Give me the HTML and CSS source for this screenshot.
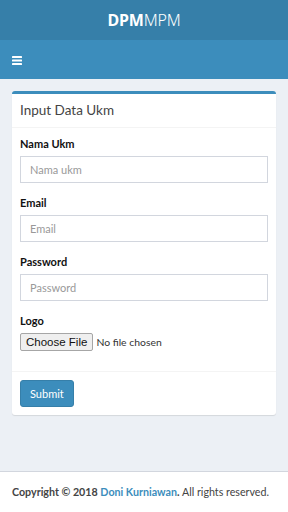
FILE: index.html
```html
<!DOCTYPE html>
<html>
<head>
<meta charset="utf-8">
<link rel="stylesheet" href="styles.css">
</head>
<body>
<div class="wrapper">
  <header class="main-header">
    <div class="logo"><b>DPM</b><span class="light">MPM</span></div>
    <nav class="navbar">
      <span class="toggle">
        <svg width="10" height="9" viewBox="0 0 10 9"><rect x="0" y="0" width="10" height="2" rx="0.6" fill="#fff"/><rect x="0" y="3.5" width="10" height="2" rx="0.6" fill="#fff"/><rect x="0" y="7" width="10" height="2" rx="0.6" fill="#fff"/></svg>
      </span>
    </nav>
  </header>
  <main class="content">
    <div class="box">
      <div class="box-header"><h3 class="box-title">Input Data Ukm</h3></div>
      <form>
        <div class="box-body">
          <div class="form-group">
            <label>Nama Ukm</label>
            <input class="form-control" type="text" placeholder="Nama ukm">
          </div>
          <div class="form-group">
            <label>Email</label>
            <input class="form-control" type="text" placeholder="Email">
          </div>
          <div class="form-group">
            <label>Password</label>
            <input class="form-control" type="text" placeholder="Password">
          </div>
          <div class="form-group">
            <label>Logo</label>
            <input class="file" type="file">
          </div>
        </div>
        <div class="box-footer">
          <button type="button" class="btn">Submit</button>
        </div>
      </form>
    </div>
  </main>
  <footer class="main-footer"><strong>Copyright © 2018 <a>Doni Kurniawan</a>.</strong> All rights reserved.</footer>
</div>
</body>
</html>
```
FILE: styles.css
```css
* { box-sizing: border-box; }
html, body { margin: 0; padding: 0; }
body {
  font-family: Lato, "Source Sans Pro", "Noto Sans", sans-serif;
  font-size: 11px;
  color: #333;
  background: #ecf0f5;
}
.wrapper { min-height: 100vh; display: flex; flex-direction: column; }
.logo {
  height: 40px;
  background: #367fa9;
  color: #fff;
  font-family: "Noto Sans", "Open Sans", sans-serif;
  font-size: 16px;
  line-height: 40px;
  text-align: center;
  letter-spacing: -0.2px;
}
.logo b { font-weight: 700; }
.logo .light { font-weight: 300; }
.navbar {
  height: 39px;
  background: #3c8dbc;
  display: flex;
  align-items: center;
  padding-left: 12px;
}
.toggle { display: flex; padding-top: 1px; }
.content { flex: 1; padding: 12px; }
.box {
  background: #fff;
  border-top: 3px solid #3c8dbc;
  border-radius: 3px;
  box-shadow: 0 1px 1px rgba(0,0,0,0.1);
}
.box-header {
  padding: 7px 8px 8px;
  border-bottom: 1px solid #f4f4f4;
}
.box-title {
  margin: 0;
  font-size: 13.5px;
  font-weight: 400;
  line-height: 18px;
  color: #444;
}
.box-body { padding: 8px 8px 8px; }
.form-group { margin-bottom: 12px; }
label {
  display: block;
  font-weight: 700;
  font-size: 11px;
  line-height: 16px;
  margin-bottom: 4px;
  color: #111;
}
.form-control {
  display: block;
  width: 100%;
  height: 27px;
  padding: 4px 9px;
  border: 1px solid #d2d6de;
  border-radius: 0;
  font-family: inherit;
  font-size: 11px;
  color: #555;
  outline: none;
}
.form-control::placeholder { color: #999; }
.file {
  display: block;
  font-family: Lato, sans-serif;
  font-size: 10.4px;
  color: #333;
  height: 18px;
}
.file::file-selector-button {
  font-family: "Liberation Sans", Arial, sans-serif;
  font-size: 11.5px;
  height: 18px;
  padding: 0 5px;
  margin-right: 3px;
  background: #efefef;
  border: 1px solid #a6a6a6;
  border-radius: 2px;
  color: #111;
}
.box-footer {
  padding: 8px;
  border-top: 1px solid #f4f4f4;
}
.btn {
  background: #3c8dbc;
  border: 1px solid #367fa9;
  border-radius: 3px;
  color: #fff;
  font-family: inherit;
  font-size: 11px;
  height: 27px;
  padding: 0 9px;
}
.main-footer {
  background: #fff;
  border-top: 1px solid #d2d6de;
  padding: 12px;
  line-height: 16px;
  font-size: 10.7px;
  color: #444;
}
.main-footer a { color: #3c8dbc; }
```
